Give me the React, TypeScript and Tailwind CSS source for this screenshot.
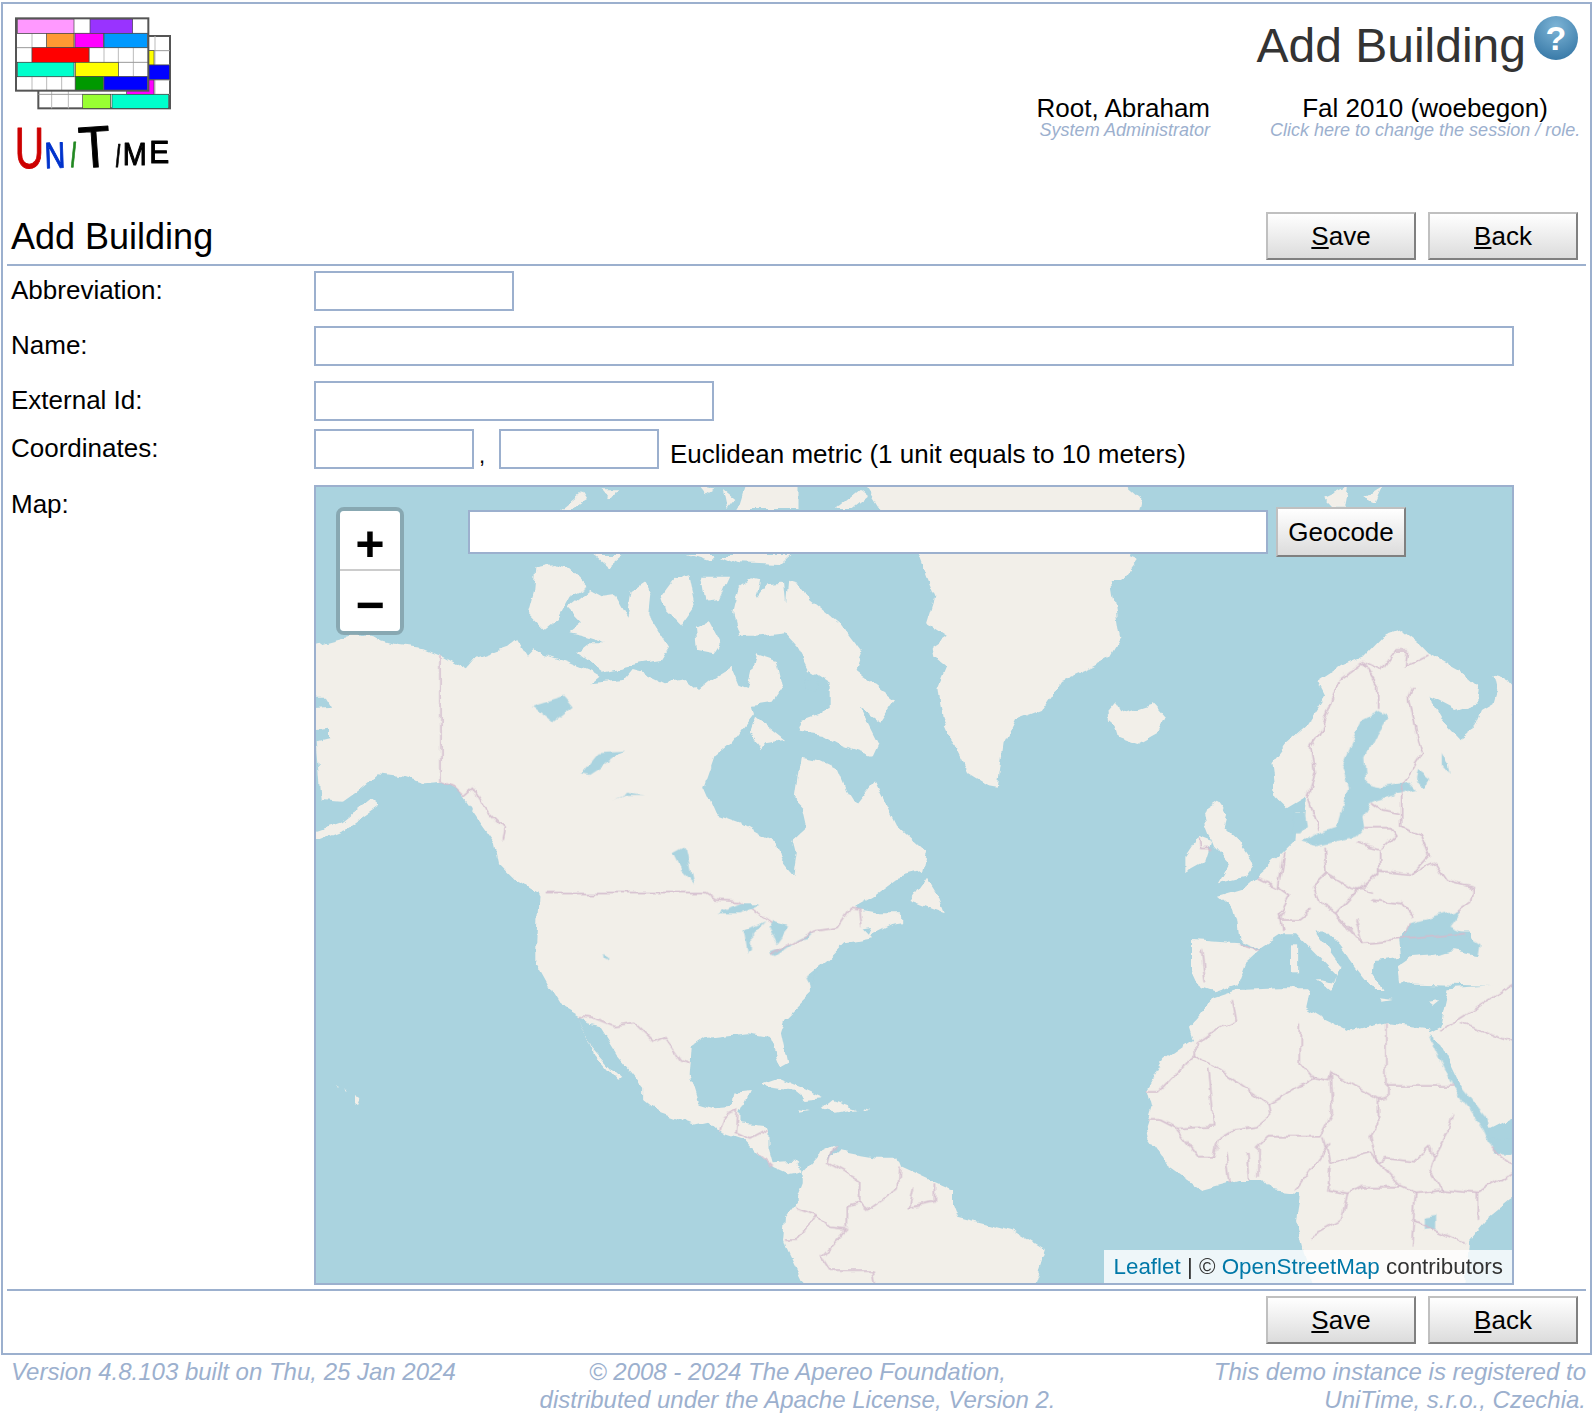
import React from "react";

const SANS = "font-['Liberation_Sans',Arial,sans-serif]";

// each group holds shapes read from one crop of the map, so it has its own transform
const MAP_GROUPS = [
  {
    tf: "translate(300 480) scale(0.4146 0.3333)",
    land: [
      "-20,520 60,490 120,470 170,470 240,495 300,505 340,525 400,565 420,535 500,500 520,480 545,530 565,505 590,525 640,545 700,575 720,590 700,610 780,600 800,570 830,580 880,610 930,600 960,630 1000,590 1040,560 1060,620 1080,630 1100,520 1150,540 1165,620 1140,665 1090,675 1095,700 1040,790 1000,830 975,920 1005,1005 1060,1030 1110,1065 1150,1090 1160,1140 1190,1185 1198,1120 1190,1080 1225,1040 1215,985 1195,960 1210,830 1250,840 1300,870 1320,930 1340,970 1385,900 1440,1040 1510,1120 1500,1175 1440,1195 1380,1250 1330,1285 1400,1300 1450,1300 1450,1330 1350,1350 575,1350 590,1290 570,1240 520,1200 480,1150 470,1090 430,1020 380,930 345,905 300,910 250,890 190,880 140,930 100,965 50,960 38,790 70,780 70,740 -20,750 -20,690 75,680 60,650 -20,650",
      "-20,1080 100,1030 170,960 190,980 110,1050 50,1080",
      "570,262 610,252 650,265 695,320 650,350 620,420 590,450 550,400 565,330",
      "645,385 700,330 730,350 760,345 790,410 800,330 830,305 845,340 840,400 890,500 870,540 820,550 730,575 670,520 700,490 740,490 690,470 650,460 680,430",
      "870,350 900,300 940,285 955,380 920,440 880,390",
      "965,290 1035,290 1010,360 975,365",
      "955,440 985,420 1015,490 1000,520 960,510",
      "1045,400 1060,320 1090,295 1110,300 1100,360 1130,310 1165,305 1170,370 1175,305 1215,320 1230,360 1300,430 1355,520 1340,570 1435,660 1400,725 1350,680 1395,790 1380,830 1310,800 1260,765 1205,755 1215,720 1280,690 1280,610 1230,570 1200,500 1170,460 1100,470 1060,470",
      "1085,760 1100,710 1130,740 1170,780 1120,790 1110,805",
      "630,90 680,40 690,60 650,90",
      "725,25 765,25 745,55",
      "960,20 1000,25 975,45",
      "1020,30 1050,60 1030,90",
      "1080,10 1200,10 1200,90 1060,90",
      "1290,90 1350,30 1370,50 1330,90",
      "710,225 780,225 745,260",
      "930,225 1000,225 985,245",
      "1015,225 1185,225 1160,255 1060,250",
      "1360,10 1568,10 1568,770 1550,720 1540,620 1560,560 1530,530 1525,500 1560,470 1510,430 1530,350 1510,290 1490,222 1400,90",
      "1470,1260 1510,1190 1540,1250 1555,1300 1510,1280",
    ],
    water: [
      "560,680 640,650 660,680 610,730 590,710",
      "680,880 720,820 780,815 730,860 700,885",
      "755,960 790,935 830,945 780,945",
      "900,1120 930,1100 950,1210 920,1170",
      "1220,600 1250,590 1245,635 1225,635",
    ],
    border: [
      "340,525 340,905 370,920 395,950 418,925 455,1000 495,1050 490,1080",
      "590,1240 975,1240 1000,1260 1060,1265 1140,1330",
    ],
  },
  {
    tf: "translate(950 480) scale(0.3827 0.3333)",
    land: [
      "-5,10 450,10 500,60 490,110 470,230 490,240 450,300 420,300 445,480 420,530 370,560 290,600 270,640 240,690 170,720 140,790 125,920 100,915 50,880 20,810 -5,770",
      "975,50 1040,15 1030,80 1000,80",
      "1080,50 1130,15 1110,65",
      "405,710 435,670 450,700 490,685 530,670 565,715 545,760 490,795 440,775 430,735",
      "840,850 880,790 930,740 980,650 960,605 1020,560 1080,530 1130,470 1180,450 1225,490 1250,520 1330,570 1380,620 1375,670 1320,690 1270,660 1250,650 1285,720 1330,775 1370,745 1390,690 1420,670 1430,630 1420,580 1450,590 1470,620 1500,1355 755,1355 740,1290 700,1250 760,1230 800,1190 870,1120 900,1085 905,1000 925,1000 930,1040 920,1090 930,950 880,985 850,950",
      "660,990 700,960 725,1000 715,1040 760,1090 795,1150 770,1190 700,1210 730,1150 690,1100 670,1040",
      "615,1130 650,1070 685,1085 670,1140 615,1175",
    ],
    water: [
      "1080,720 1120,695 1145,710 1110,770 1085,830 1090,910 1130,920 1200,905 1220,930 1120,960 1100,970 1080,1010 1085,1040 1060,1070 990,1090 950,1100 920,1090 960,1060 1010,1040 1030,960 1040,920 1025,860 1050,790",
      "1220,870 1255,900 1245,920 1215,900",
      "1285,820 1300,850 1305,885 1285,860",
      "900,1000 925,1000 930,1040 915,1060 890,1060",
    ],
    border: [
      "1210,620 1200,650 1220,760 1235,820 1190,900 1180,930 1180,1040",
      "1020,600 965,765 945,800 955,880 935,950 965,1050",
      "1020,595 1080,545 1125,570 1160,510 1195,510 1190,560 1250,525",
      "1080,545 1120,620 1120,690",
      "800,1190 860,1225 885,1245 860,1300 870,1350",
      "875,1120 860,1225",
      "980,1100 985,1180 950,1220 965,1270 1010,1300 1060,1240 1120,1180 1120,1110 1085,1100 1060,1090",
      "985,1180 1050,1225 1100,1240",
      "1120,1170 1210,1180 1270,1150 1300,1200 1365,1220 1360,1270 1320,1300",
      "1180,1040 1230,1070 1250,1130 1210,1180",
      "1085,1040 1150,1040 1165,1065 1125,1110",
      "1105,970 1130,990 1175,1000",
      "1010,1300 1050,1350",
      "1100,1260 1180,1270 1210,1310",
      "650,1075 655,1105 685,1105",
    ],
  },
  {
    tf: "translate(300 900) scale(0.4146 0.3333)",
    land: [
      "575,-5 1330,-5 1340,30 1350,75 1380,115 1310,130 1270,180 1230,220 1235,280 1170,360 1160,400 1175,490 1160,500 1130,410 1080,400 1040,405 975,415 945,440 940,530 960,610 1000,625 1040,620 1045,575 1085,570 1060,640 1060,670 1130,680 1130,745 1140,790 1190,785 1215,810 1175,820 1140,800 1100,760 1070,720 1010,695 985,665 950,675 870,640 830,600 830,560 770,470 725,380 705,375 665,345 630,320 610,280 570,190 570,130",
      "670,355 700,440 750,510 775,540 765,545 705,460",
      "1370,110 1450,60 1445,40 1385,70",
      "1115,550 1150,535 1200,560 1260,595 1215,600 1190,575 1130,565",
      "1260,625 1285,600 1340,625 1290,635",
      "1205,625 1230,630 1205,635",
      "1355,625 1375,630 1360,633",
      "135,595 150,600 145,615 135,610",
      "105,568 112,572 108,575",
      "85,555 92,558 88,560",
      "1215,810 1250,760 1290,735 1275,780 1300,750 1340,760 1390,770 1440,770 1450,800 1520,840 1575,870 1575,1165 1218,1165 1170,1040 1165,1020 1170,950 1200,900 1215,850",
    ],
    water: [
      "1010,40 1060,10 1110,10 1060,40",
      "1080,160 1070,90 1120,60 1090,100 1090,150",
      "1140,60 1180,80 1150,130 1130,80",
      "1135,155 1190,130 1150,165",
      "1190,120 1240,90 1220,115",
      "728,165 738,170 738,185 730,180",
      "1225,230 1245,210 1235,260",
    ],
    border: [
      "670,350 710,355 760,380 810,370 855,425 880,410 920,480 940,488",
      "1140,160 1190,125 1240,90 1300,80 1330,25 1350,30 1355,80",
      "1010,695 1020,650 1055,630 1050,700 1085,720 1130,690",
      "1100,755 1140,800",
      "1290,735 1275,790 1350,840 1350,910 1370,930 1440,870 1445,800",
      "1480,860 1470,920 1530,905 1530,850",
      "1195,920 1245,945 1280,985 1320,990 1260,1070 1280,1110 1380,1110 1385,1150",
      "1245,945 1200,1020 1170,1020",
      "1350,910 1320,920 1320,985",
    ],
  },
  {
    tf: "translate(950 900) scale(0.412 0.3333)",
    land: [
      "585,120 700,130 755,150 720,190 700,255 640,280 605,265 585,210",
      "700,-5 695,70 700,120 755,145 810,100 840,100 880,150 940,225 935,250 895,240 925,270 950,200 890,100 890,60 950,140 985,200 1030,270 1050,270 1025,220 1030,180 1095,170 1090,120 1120,70 1180,80 1240,30 1200,10 1250,-5",
      "1240,-5 1390,-5 1390,260 1090,250 1085,200 1120,170 1170,165 1220,150 1285,165",
      "1210,265 1390,250 1390,640 1310,690 1280,640 1240,560 1190,430 1160,400 1190,380",
      "640,295 700,270 800,265 870,265 860,320 900,350 975,395 1060,370 1160,385 1170,420 1220,550 1300,680 1310,720 1390,770 1390,870 1300,960 1260,1020 1250,1165 880,1165 840,960 850,880 780,870 760,840 700,840 610,870 530,800 480,710 475,680 490,620 480,570 520,480 590,420 580,380 610,340",
      "-5,870 20,950 150,990 230,1050 200,1165 -5,1165",
      "830,130 845,130 845,220 830,220",
      "890,240 935,250 915,265",
      "1160,305 1185,300 1170,315",
      "1040,295 1075,300 1050,305",
    ],
    water: [
      "1095,150 1120,70 1180,50 1240,30 1210,80 1265,110 1290,130 1285,165 1220,150 1170,165 1120,170",
      "1162,410 1195,450 1240,560 1305,660 1310,720 1390,710 1390,760 1320,760 1295,690 1220,560",
      "1150,950 1180,945 1180,985 1150,990",
    ],
    border: [
      "610,150 620,250",
      "700,130 755,150",
      "685,300 695,360 640,390 595,430 595,460 510,570 480,570",
      "595,460 770,610 880,535 920,545 925,520 1040,600 1058,595 1058,370",
      "850,370 850,490 880,535",
      "1058,558 1220,558",
      "625,505 640,680 550,685 510,660 480,660",
      "770,610 775,650 745,680 690,690 650,720 640,770 600,770 550,690",
      "925,520 930,640 900,710 770,710 745,740",
      "1040,600 1040,670 1020,710 1030,760 1040,790 1020,760 920,790 905,715",
      "1220,640 1210,690 1175,770 1165,740 1130,780 1060,770 1040,790 1095,860 1130,880 1195,870 1165,810 1175,770",
      "750,830 750,740",
      "840,870 920,730",
      "920,800 915,870 965,880 950,960 880,1010",
      "965,880 1000,860 1095,860",
      "1130,880 1120,1040",
      "1195,870 1285,880 1370,810",
      "1280,880 1280,960",
      "1120,960 1250,1030",
      "1310,740 1370,800",
      "1190,390 1370,250",
      "1240,370 1370,430",
      "810,30 800,60 850,60 880,30",
      "940,50 1000,130 1100,120 1120,70",
      "985,60 1000,130",
      "1090,120 1250,100",
      "670,760 680,850",
      "720,760 725,840",
    ],
  },
];

function WorldMap() {
  return (
    <svg viewBox="316 487 1196 796" className="block w-full h-full">
      <defs>
        {/* roughens the hand-placed coast lines */}
        <filter id="coast" filterUnits="userSpaceOnUse" x="296" y="467" width="1236" height="836">
          <feTurbulence type="fractalNoise" baseFrequency="0.06" numOctaves="3" seed="4" result="n" />
          <feDisplacementMap in="SourceGraphic" in2="n" scale="9" xChannelSelector="R" yChannelSelector="G" />
          <feGaussianBlur stdDeviation="0.5" />
        </filter>
      </defs>
      <g filter="url(#coast)">
        {MAP_GROUPS.map((g, i) => (
          <g key={i} transform={g.tf}>
            {g.land.map((p, j) => (
              <polygon key={j} points={p} fill="#f2efe9" />
            ))}
          </g>
        ))}
        {MAP_GROUPS.map((g, i) => (
          <g key={i} transform={g.tf}>
            {g.water.map((p, j) => (
              <polygon key={j} points={p} fill="#aad3df" />
            ))}
            {g.border.map((p, j) => (
              <polyline
                key={j}
                points={p}
                fill="none"
                stroke="#d3bccd"
                strokeWidth="1.5"
                vectorEffect="non-scaling-stroke"
              />
            ))}
          </g>
        ))}
      </g>
    </svg>
  );
}

function Logo() {
  const cols = [96, 140, 185, 225, 268, 312, 355, 400];
  const rows = [100, 143, 187, 230];
  const bars: [number, number, number, number, string][] = [
    [52, 57, 170, 43, "#ff99ff"],
    [270, 57, 128, 43, "#9933ff"],
    [140, 100, 82, 43, "#ff9933"],
    [225, 100, 85, 43, "#ff00ff"],
    [312, 100, 130, 43, "#0099ff"],
    [96, 143, 171, 44, "#ff0000"],
    [445, 152, 17, 43, "#ffff00"],
    [52, 187, 170, 43, "#00ffcc"],
    [226, 187, 129, 43, "#ffff00"],
    [445, 195, 63, 43, "#0000ff"],
    [226, 230, 84, 42, "#009900"],
    [312, 230, 130, 42, "#0000ff"],
    [248, 283, 84, 42, "#99ff33"],
    [336, 283, 170, 42, "#00ffcc"],
  ];
  return (
    <svg viewBox="9 12 600 570" className="block w-[200px] h-[190px] blur-[0.4px]">
      <rect x="115" y="108" width="395" height="217" fill="#fff" stroke="#555" strokeWidth="6" />
      <line x1="465" y1="108" x2="465" y2="283" stroke="#bbb" strokeWidth="3" />
      {[155, 205].map((x) => (
        <line key={x} x1={x} y1="272" x2={x} y2="325" stroke="#bbb" strokeWidth="3" />
      ))}
      {[152, 195, 240].map((y) => (
        <line key={y} x1="445" y1={y} x2="510" y2={y} stroke="#999" strokeWidth="3" />
      ))}
      <line x1="115" y1="283" x2="510" y2="283" stroke="#999" strokeWidth="3" />
      <rect x="380" y="240" width="82" height="43" fill="#ff00ff" stroke="#444" strokeWidth="2" />
      <rect x="48" y="55" width="397" height="217" fill="#fff" />
      {cols.map((x) => (
        <line key={x} x1={x} y1="100" x2={x} y2="272" stroke="#bbb" strokeWidth="3" />
      ))}
      {rows.map((y) => (
        <line key={y} x1="48" y1={y} x2="445" y2={y} stroke="#999" strokeWidth="3" />
      ))}
      {bars.map(([x, y, w, h, c], i) => (
        <rect key={i} x={x} y={y} width={w} height={h} fill={c} stroke="#444" strokeWidth="2" />
      ))}
      <rect x="48" y="55" width="397" height="217" fill="none" stroke="#555" strokeWidth="6" />
      <g fontFamily="'Liberation Sans', Arial, sans-serif" stroke="currentColor" strokeWidth="3" strokeLinejoin="round">
        <text x="44" y="503" fontSize="170" fill="#cc0000" color="#cc0000" textLength="88" lengthAdjust="spacingAndGlyphs">U</text>
        <text x="135" y="505" fontSize="110" fill="#0033cc" color="#0033cc" textLength="62" lengthAdjust="spacingAndGlyphs" transform="rotate(-2 135 505)">N</text>
        <text x="208" y="500" fontSize="110" fill="#228822" color="#228822" textLength="18" lengthAdjust="spacingAndGlyphs" transform="rotate(6 208 500)">I</text>
        <text x="240" y="505" fontSize="175" fill="#000" color="#000" textLength="96" lengthAdjust="spacingAndGlyphs" transform="rotate(-4 240 505)">T</text>
        <text x="343" y="500" fontSize="100" fill="#000" color="#000" textLength="16" lengthAdjust="spacingAndGlyphs" transform="rotate(6 343 500)">I</text>
        <text x="368" y="495" fontSize="95" fill="#000" color="#000" textLength="72" lengthAdjust="spacingAndGlyphs">M</text>
        <text x="448" y="490" fontSize="95" fill="#000" color="#000" textLength="60" lengthAdjust="spacingAndGlyphs">E</text>
      </g>
    </svg>
  );
}

function Btn({ first, rest }: { first: string; rest: string }) {
  return (
    <button className="h-12 w-[150px] text-[26px] leading-none text-black bg-gradient-to-b from-white to-[#dcdcdc] border-2 border-t-[#c0c0c0] border-l-[#c0c0c0] border-r-[#808080] border-b-[#808080]">
      <u>{first}</u>
      {rest}
    </button>
  );
}

function Field({ className }: { className: string }) {
  return <input type="text" className={`h-10 border-2 border-[#9cb0ce] bg-white ${className}`} />;
}

function Row({ label, top, pad, children }: { label: string; top: string; pad: string; children: React.ReactNode }) {
  return (
    <div className={`grid grid-cols-[307px_1fr] ${top}`}>
      <div className={`pl-1 text-[26px] leading-[30px] ${pad}`}>{label}</div>
      <div className="flex items-start">{children}</div>
    </div>
  );
}

export default function App() {
  return (
    <div className={`${SANS} bg-white text-black min-h-[1422px]`}>
      <div className="ml-px mt-[2px] w-[1591px] h-[1353px] border-2 border-[#9cb0ce]">
        {/* Header */}
        <div className="flex justify-between h-[208px]">
          <Logo />
          <div className="flex flex-col items-end pr-[10px]">
            <div className="flex items-start pt-[14px] pr-[2px] gap-2">
              <div className="text-[48px] leading-[56px] text-[#333]">Add Building</div>
              <div className="mt-[-2px] w-11 h-11 rounded-full flex items-center justify-center text-white font-bold text-[34px] leading-none bg-[radial-gradient(circle_at_50%_25%,#7db4d6,#2c6f9f)]">
                ?
              </div>
            </div>
            <div className="flex gap-[60px] mt-[21px]">
              <div className="w-[172px] flex flex-col items-end whitespace-nowrap">
                <div className="text-[26px] leading-[26px]">Root, Abraham</div>
                <div className="text-[18px] leading-[19px] italic text-[#9cb0ce]">System Administrator</div>
              </div>
              <div className="w-[310px] text-center whitespace-nowrap">
                <div className="text-[26px] leading-[26px]">Fal 2010 (woebegon)</div>
                <div className="text-[18px] leading-[19px] italic text-[#9cb0ce]">Click here to change the session / role.</div>
              </div>
            </div>
          </div>
        </div>

        {/* Form */}
        <div className="mx-1">
          <div className="flex justify-between items-start pb-1 pr-2 pl-1 border-b-2 border-[#9cb0ce]">
            <div className="text-[36px] leading-[42px] pt-1">Add Building</div>
            <div className="flex gap-3">
              <Btn first="S" rest="ave" />
              <Btn first="B" rest="ack" />
            </div>
          </div>

          <Row label="Abbreviation:" top="mt-[5px]" pad="pt-1">
            <Field className="w-[200px]" />
          </Row>
          <Row label="Name:" top="mt-[15px]" pad="pt-1">
            <Field className="w-[1200px]" />
          </Row>
          <Row label="External Id:" top="mt-[15px]" pad="pt-1">
            <Field className="w-[400px]" />
          </Row>
          <Row label="Coordinates:" top="mt-2" pad="pt-[4px]">
            <Field className="w-[160px]" />
            <span className="w-[25px] pl-[5px] text-[22px] leading-none pt-4">,</span>
            <Field className="w-[160px]" />
            <span className="ml-[11px] text-[26px] leading-[30px] pt-[10px]">Euclidean metric (1 unit equals to 10 meters)</span>
          </Row>
          <Row label="Map:" top="mt-4" pad="pt-1">
            <div className="relative w-[1200px] h-[800px] border-2 border-[#9cb0ce] bg-[#aad3df] overflow-hidden">
              <WorldMap />
              <div className="absolute left-5 top-5 w-[68px] h-32 border-4 border-black/20 rounded-lg bg-clip-padding">
                <div className="h-[60px] pt-4 bg-white rounded-t-[4px] border-b-2 border-[#ccc] flex items-center justify-center font-['Liberation_Mono',monospace] font-bold text-[50px] leading-none">
                  +
                </div>
                <div className="h-[60px] pt-4 bg-white rounded-b-[4px] flex items-center justify-center font-['Liberation_Mono',monospace] font-bold text-[50px] leading-none">
                  −
                </div>
              </div>
              <div className="absolute left-[152px] top-[23px] flex items-start gap-2">
                <input type="text" className="w-[800px] h-[44px] border-2 border-[#9cb0ce] bg-white" />
                <button className="-mt-[3px] h-[50px] w-[130px] text-[26px] leading-none text-black bg-gradient-to-b from-white to-[#dcdcdc] border-2 border-t-[#c0c0c0] border-l-[#c0c0c0] border-r-[#808080] border-b-[#808080]">
                  Geocode
                </button>
              </div>
              <div className="absolute right-0 bottom-0 h-[33px] px-[9px] bg-white/80 text-[22.4px] leading-[34px] text-[#333] whitespace-nowrap">
                <span className="text-[#0078a8]">Leaflet</span> | © <span className="text-[#0078a8]">OpenStreetMap</span> contributors
              </div>
            </div>
          </Row>

          <div className="mt-1 pt-[5px] pr-2 flex justify-end gap-3 border-t-2 border-[#9cb0ce]">
            <Btn first="S" rest="ave" />
            <Btn first="B" rest="ack" />
          </div>
        </div>
      </div>

      {/* Footer */}
      <div className="grid grid-cols-3 pl-[11px] pr-[10px] pt-[3px] text-[24px] leading-[28px] italic text-[#9cb0ce]">
        <div>Version 4.8.103 built on Thu, 25 Jan 2024</div>
        <div className="text-center whitespace-nowrap -ml-[2px]">
          © 2008 - 2024 The Apereo Foundation,
          <br />
          distributed under the Apache License, Version 2.
        </div>
        <div className="text-right">
          This demo instance is registered to
          <br />
          UniTime, s.r.o., Czechia.
        </div>
      </div>
    </div>
  );
}
